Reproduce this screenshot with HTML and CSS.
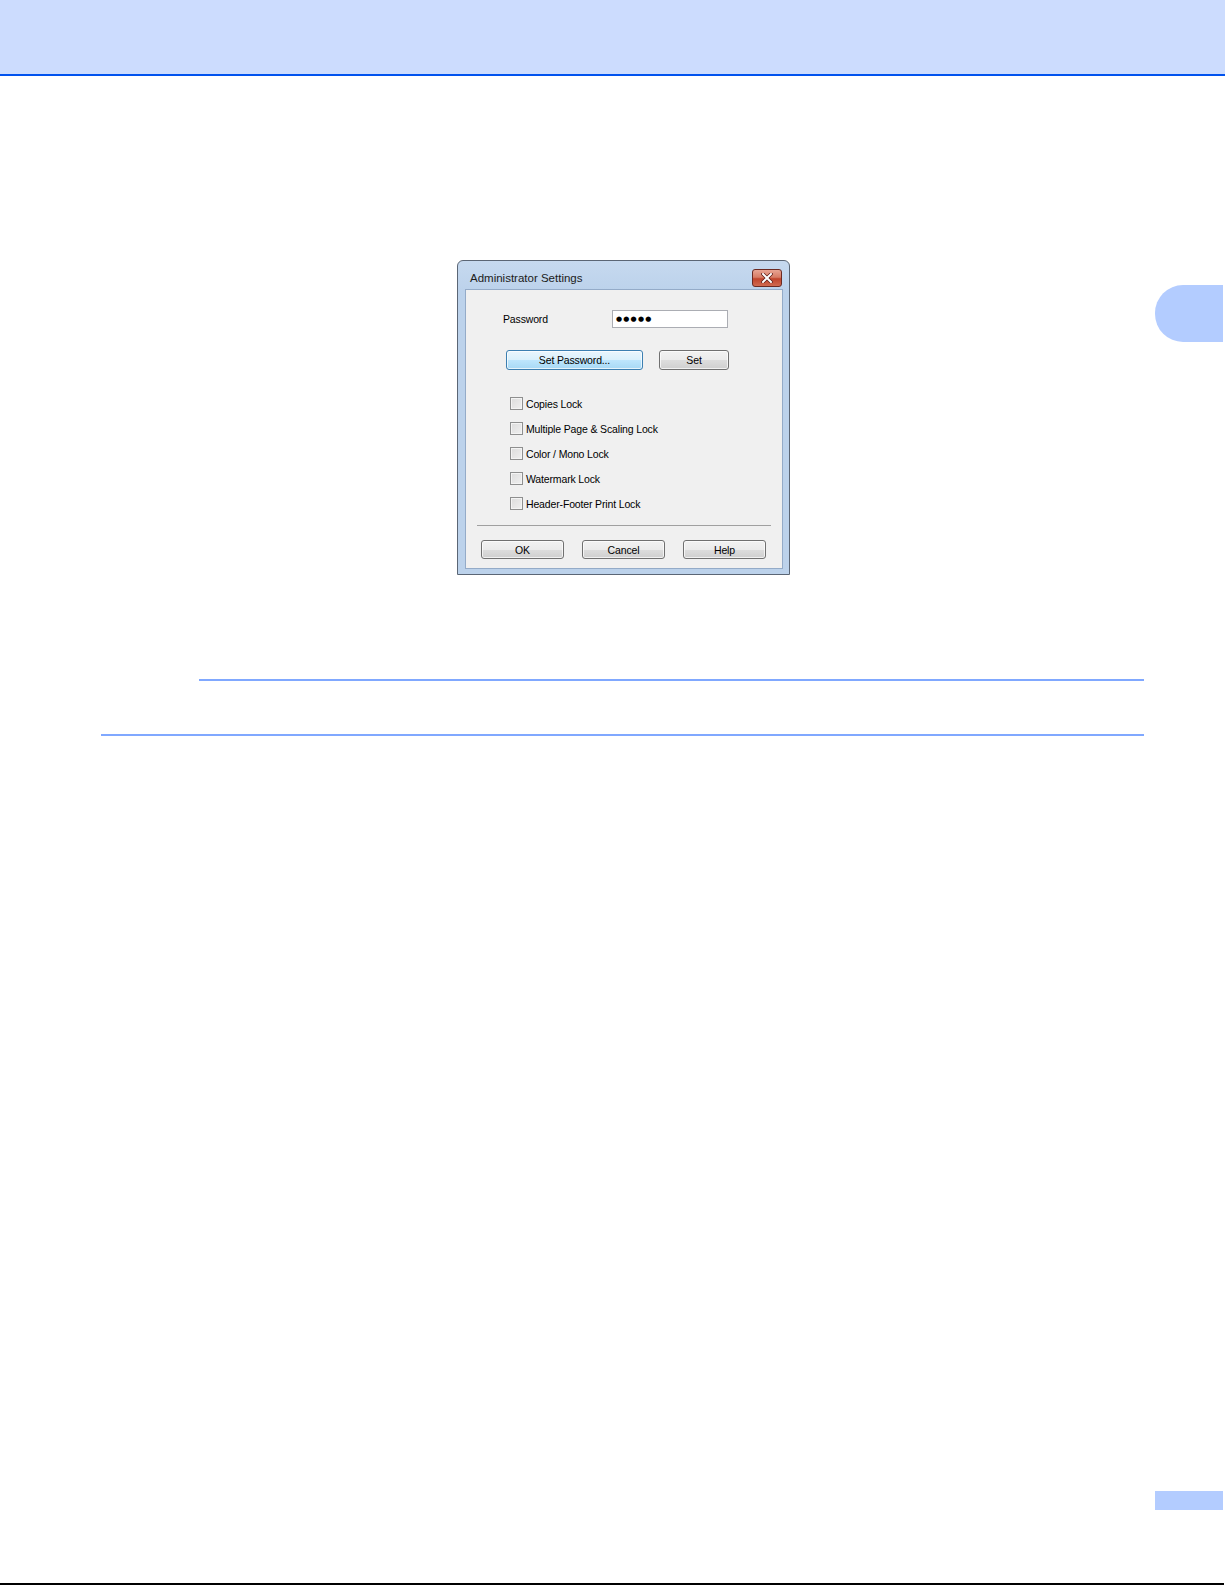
FILE: index.html
```html
<!DOCTYPE html>
<html lang="en">
<head>
    <meta charset="UTF-8">
    <title>Administrator Settings</title>
    <link rel="stylesheet" href="styles.css">
</head>
<body>
<div class="page">

    <header class="top-band"></header>
    <div class="chapter-tab"></div>

    <main class="content">
        <div class="dialog">
            <div class="titlebar">
                <span class="title">Administrator Settings</span>
                <span class="close-btn">
                    <svg width="12" height="10" viewBox="0 0 12 10">
                        <path d="M2 1 L10 9 M10 1 L2 9" stroke="#5a1a14" stroke-width="3.4" stroke-linecap="square"/>
                        <path d="M2 1 L10 9 M10 1 L2 9" stroke="#fff" stroke-width="2" stroke-linecap="square"/>
                    </svg>
                </span>
            </div>

            <div class="client">
                <div class="pw-row">
                    <span class="pw-label">Password</span>
                    <span class="pw-input">●●●●●</span>
                </div>

                <div class="set-row">
                    <span class="btn btn-default btn-wide">Set Password...</span>
                    <span class="btn btn-small">Set</span>
                </div>

                <ul class="locks">
                    <li><span class="check"></span>Copies Lock</li>
                    <li><span class="check"></span>Multiple Page &amp; Scaling Lock</li>
                    <li><span class="check"></span>Color / Mono Lock</li>
                    <li><span class="check"></span>Watermark Lock</li>
                    <li><span class="check"></span>Header-Footer Print Lock</li>
                </ul>

                <div class="separator"></div>

                <div class="action-row">
                    <span class="btn">OK</span>
                    <span class="btn">Cancel</span>
                    <span class="btn">Help</span>
                </div>
            </div>
        </div>

        <div class="note-rule"></div>
        <div class="section-rule"></div>
    </main>

    <footer class="page-foot">
        <div class="page-num"></div>
        <div class="foot-rule"></div>
    </footer>

</div>
</body>
</html>
```

FILE: styles.css
```css
/* Manual page: blue band on top, dialog figure, rules, page footer */
:root {
    --band-bg: #ccdcfe;
    --band-line: #0052ee;
    --tab-bg: #b3ccff;
    --rule: #80a8ff;
    --frame: #bcd2eb;
    --panel: #f0f0f0;
}

html, body {
    margin: 0;
    background: #fff;
}

body {
    font-family: "Liberation Sans", Arial, sans-serif;
}

.page {
    height: 1585px;
    display: flex;
    flex-direction: column;
    position: relative;
    overflow: hidden;
}

.top-band {
    height: 74px;
    background: var(--band-bg);
    border-bottom: 2px solid var(--band-line);
}

/* chapter thumb tab sitting on the right page edge */
.chapter-tab {
    position: absolute;
    top: 285px;
    right: 2px;
    width: 68px;
    height: 57px;
    background: var(--tab-bg);
    border-radius: 28px 0 0 28px;
}

.content {
    margin: 184px 81px 0 101px;
}

/* ---- dialog ---- */
.dialog {
    width: 333px;
    height: 315px;
    margin-left: 356px;
    border: 1px solid #5b6675;
    border-radius: 6px 6px 0 0;
    background: linear-gradient(to bottom, #c6d9ef 0, var(--frame) 30px, var(--frame) 100%);
    padding: 0 6px 5px 7px;
    box-sizing: border-box;
    display: flex;
    flex-direction: column;
}

.titlebar {
    height: 28px;
    display: flex;
    align-items: center;
    justify-content: space-between;
    flex-shrink: 0;
}

.title {
    font-size: 11.5px;
    color: #1b1b1b;
    padding-left: 5px;
    margin-top: 5px;
}

.close-btn {
    width: 28px;
    height: 16px;
    margin-right: 1px;
    margin-top: 5px;
    border: 1px solid #6b2a22;
    border-radius: 3px;
    background: linear-gradient(to bottom, #e8a493 0, #d77d66 45%, #c0442c 55%, #d06a50 100%);
    display: flex;
    align-items: center;
    justify-content: center;
}

.client {
    flex: 1;
    background: var(--panel);
    border: 1px solid #94abc8;
    font-size: 10.5px;
    letter-spacing: -0.15px;
    color: #000;
}

.pw-row {
    display: flex;
    align-items: center;
    margin: 20px 0 0 37px;
}

.pw-label {
    width: 109px;
}

.pw-input {
    width: 111px;
    height: 16px;
    border: 1px solid #abadb3;
    background: #fff;
    font-family: "DejaVu Sans", sans-serif;
    font-size: 7px;
    letter-spacing: 1.2px;
    line-height: 16px;
    padding-left: 3px;
}

.set-row {
    display: flex;
    gap: 16px;
    margin: 22px 0 0 40px;
}

.btn {
    display: flex;
    align-items: center;
    justify-content: center;
    width: 83px;
    height: 19px;
    box-sizing: border-box;
    border: 1px solid #707070;
    border-radius: 3px;
    background: linear-gradient(to bottom, #f2f2f2 0, #ebebeb 50%, #dddddd 51%, #cfcfcf 100%);
    box-shadow: inset 0 0 0 1px rgba(255, 255, 255, 0.7);
}

.btn-default {
    border-color: #3c7fb1;
    background: linear-gradient(to bottom, #eaf6fd 0, #d9f0fc 50%, #bee6fd 51%, #a7d9f5 100%);
}

.btn-wide {
    width: 137px;
    height: 20px;
}

.btn-small {
    width: 70px;
    height: 20px;
}

.locks {
    list-style: none;
    margin: 21px 0 0 44px;
    padding: 0;
}

.locks li {
    height: 25px;
    display: flex;
    align-items: center;
}

.check {
    width: 13px;
    height: 13px;
    box-sizing: border-box;
    border: 1px solid #8e8f8f;
    background: linear-gradient(135deg, #dcdcdc 0, #f0f0f0 100%);
    box-shadow: inset 0 0 0 1px #f4f4f4;
    margin-right: 3px;
}

.separator {
    margin: 9px 11px 0 11px;
    border-top: 1px solid #a0a0a0;
}

.action-row {
    display: flex;
    gap: 18px;
    margin: 14px 0 0 15px;
}

/* ---- text rules ---- */
.note-rule {
    margin: 104px 0 0 98px;
    height: 2px;
    background: var(--rule);
}

.section-rule {
    margin-top: 53px;
    height: 2px;
    background: var(--rule);
}

/* ---- footer ---- */
.page-foot {
    margin-top: auto;
    display: flex;
    flex-direction: column;
    align-items: flex-end;
}

.page-num {
    width: 68px;
    height: 19px;
    margin-right: 2px;
    background: var(--tab-bg);
}

.foot-rule {
    align-self: flex-start;
    width: 1224px;
    height: 2px;
    margin-top: 73px;
    background: #000;
}
```
